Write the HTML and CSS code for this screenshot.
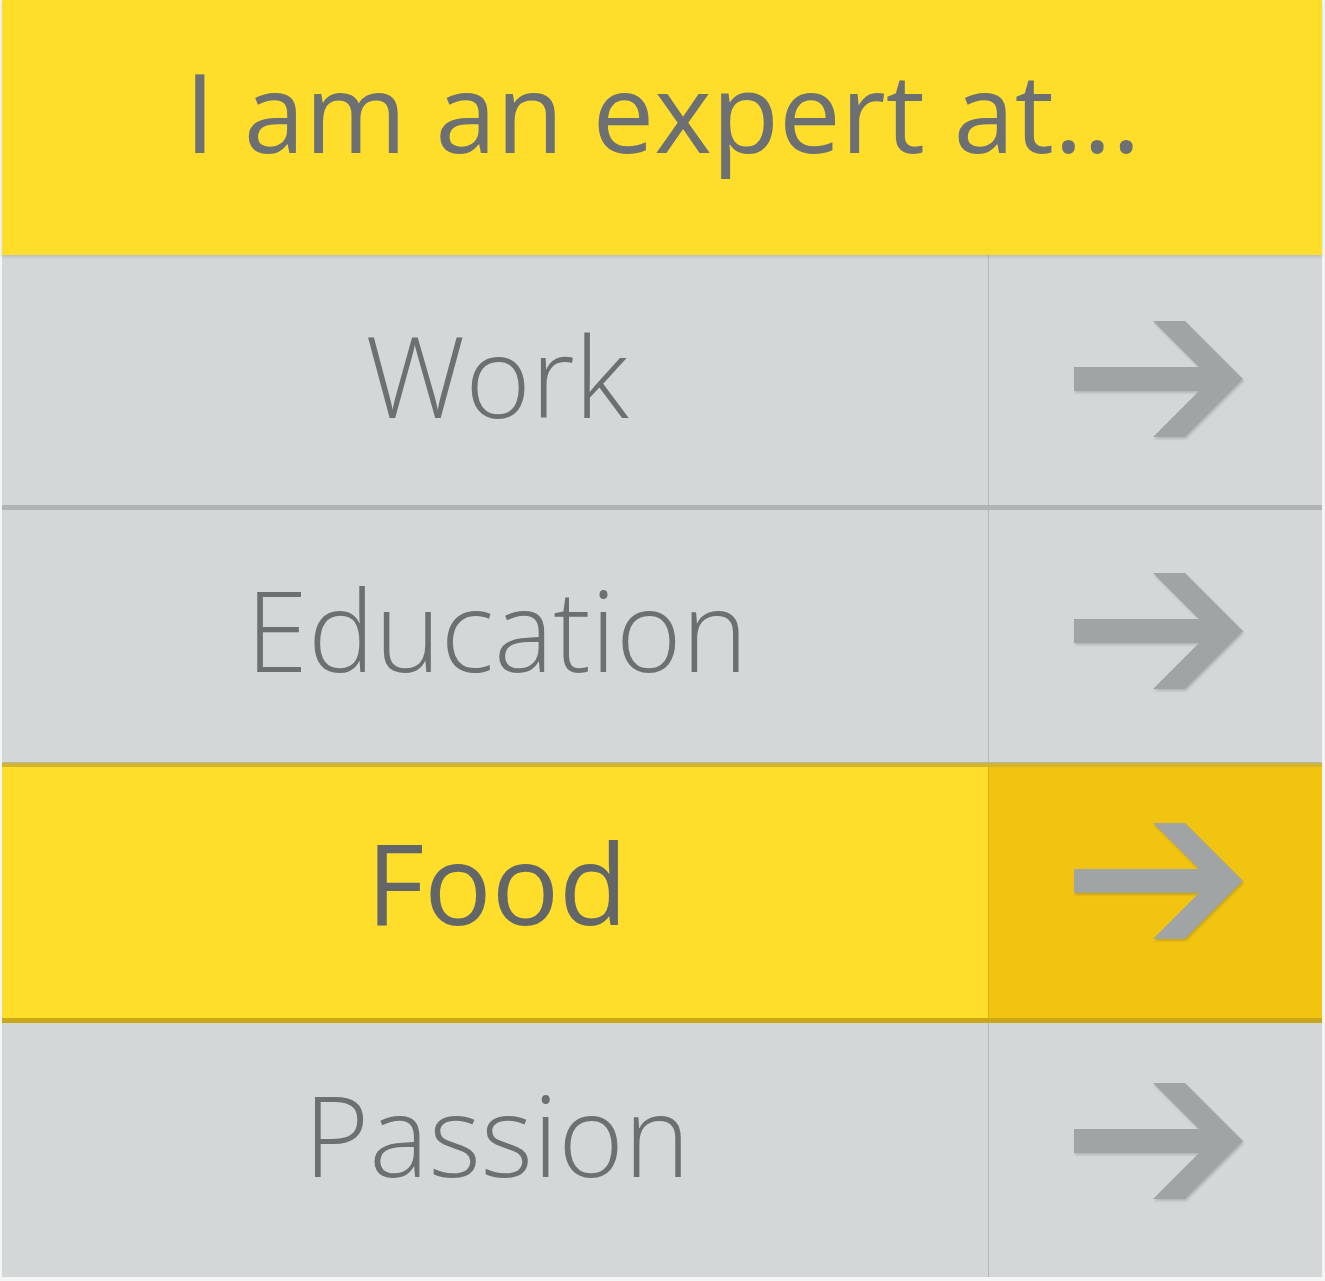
FILE: index.html
```html
<!DOCTYPE html>
<html>
<head>
<meta charset="utf-8">
<link rel="stylesheet" href="styles.css">
</head>
<body>
<div class="panel">
  <header class="head">I am an expert at...</header>
  <div class="row row-work">
    <div class="label">Work</div>
    <div class="go"><svg class="arrow" viewBox="0 0 170 118"><polygon points="0,46 125,46 79,0 111,0 169,58 111,116 79,116 125,70 0,70"/></svg></div>
  </div>
  <div class="row row-edu">
    <div class="label">Education</div>
    <div class="go"><svg class="arrow" viewBox="0 0 170 118"><polygon points="0,46 125,46 79,0 111,0 169,58 111,116 79,116 125,70 0,70"/></svg></div>
  </div>
  <div class="row row-food active">
    <div class="label">Food</div>
    <div class="go"><svg class="arrow" viewBox="0 0 170 118"><polygon points="0,46 125,46 79,0 111,0 169,58 111,116 79,116 125,70 0,70"/></svg></div>
  </div>
  <div class="row row-pass">
    <div class="label">Passion</div>
    <div class="go"><svg class="arrow" viewBox="0 0 170 118"><polygon points="0,46 125,46 79,0 111,0 169,58 111,116 79,116 125,70 0,70"/></svg></div>
  </div>
</div>
</body>
</html>
```

FILE: styles.css
```css
html, body {
  margin: 0;
  padding: 0;
  background: #f4f5f5;
}
body {
  padding: 0 3px 0 2px;
  font-family: "Open Sans", "Noto Sans", sans-serif;
  color: #6d7072;
}
.panel {
  width: 1320px;
  display: flex;
  flex-direction: column;
}
.head {
  position: relative;
  z-index: 1;
  height: 255px;
  background: #fede2a;
  display: flex;
  align-items: center;
  justify-content: center;
  font-size: 110px;
  font-weight: 400;
  padding-left: 1px;
  box-sizing: border-box;
  padding-bottom: 36px;
  box-shadow: 0 2px 3px rgba(0, 0, 0, 0.12);
}
.row {
  display: grid;
  grid-template-columns: 986px 1fr;
  background: #d3d7d8;
}
.row-work { height: 250px; border-bottom: 5px solid #b0b4b5; }
.row-edu { height: 252px; border-bottom: 1px solid #b0b4b5; }
.row-food { height: 251px; border-top: 4px solid #d3b62b; border-bottom: 5px solid #c9a717; background: #fede2a; }
.row-pass { height: 254px; }
.label {
  display: flex;
  align-items: center;
  justify-content: center;
  font-size: 112px;
  font-weight: 300;
  padding-left: 4px;
  padding-bottom: 12px;
}
.row-edu .label { padding-bottom: 15px; }
.row-food .label { font-weight: 400; color: #636668; padding-bottom: 22px; }
.row-pass .label { padding-bottom: 33px; }
.go {
  border-left: 1px solid #b4b8b9;
  display: flex;
  align-items: center;
  justify-content: center;
  padding-left: 6px;
}
.row-edu .go { padding-bottom: 8px; }
.row-food .go { background: #f1c411; border-left-color: #d6b31e; padding-bottom: 21px; }
.row-pass .go { padding-bottom: 16px; }
.arrow {
  width: 170px;
  height: 118px;
  fill: #a0a4a5;
  filter: drop-shadow(1px 2px 1px rgba(0, 0, 0, 0.15));
}
```
